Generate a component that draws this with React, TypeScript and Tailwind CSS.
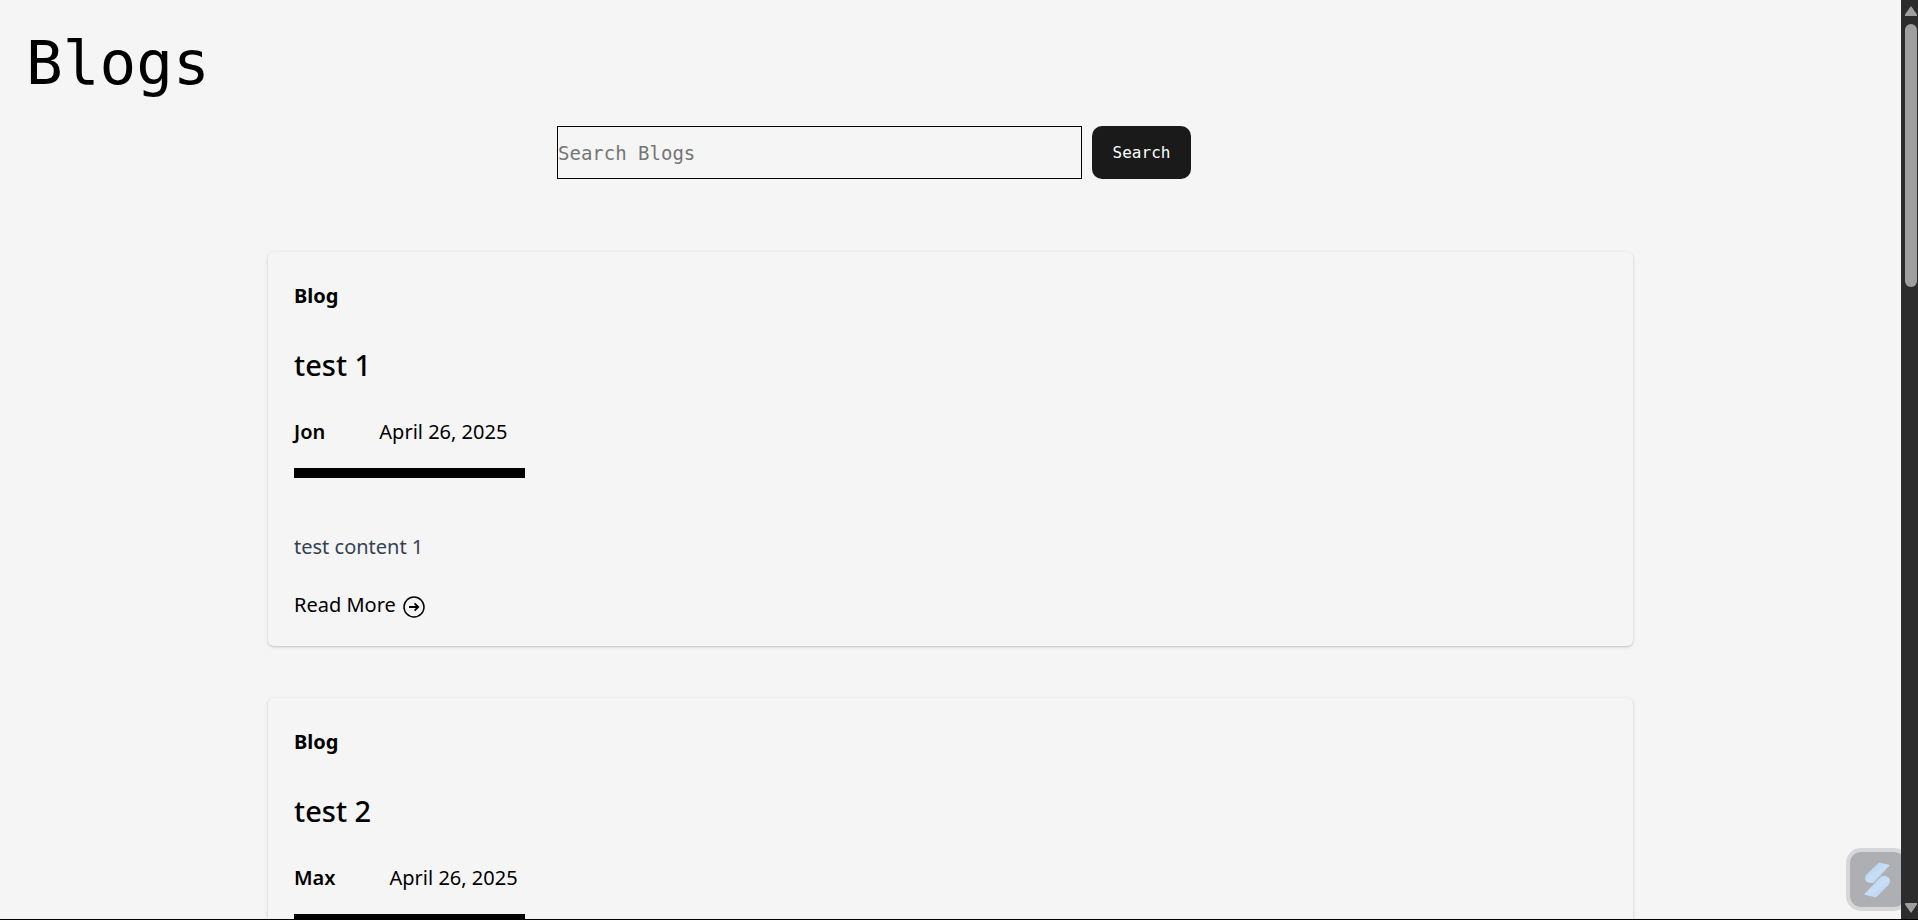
const posts = [
  { title: "test 1", author: "Jon", date: "April 26, 2025", content: "test content 1" },
  { title: "test 2", author: "Max", date: "April 26, 2025", content: "test content 2" },
];

type Post = (typeof posts)[number];

function ArrowCircle() {
  return (
    <svg className="mt-1 size-[22px]" viewBox="0 0 22 22" fill="none" stroke="currentColor" strokeWidth="1.5" aria-hidden="true">
      <circle cx="11" cy="11" r="10" />
      <path strokeWidth="1.8" d="M6 11h9M11.600 7.400 15.200 11l-3.600 3.600" />
    </svg>
  );
}

function BlogCard({ post }: { post: Post }) {
  return (
    <article className="rounded-md px-[26px] pt-[26px] pb-[25px] shadow-[0_1px_4px_rgba(0,0,0,0.1),0_1px_2px_rgba(0,0,0,0.12)]">
      <p className="text-[20px] leading-9 font-bold">Blog</p>
      <h2 className="mt-7 text-[29px] leading-[46px] font-medium">{post.title}</h2>
      <div className="mt-[26px] flex gap-[54px] text-[20px] leading-9">
        <span className="font-semibold">{post.author}</span>
        <time>{post.date}</time>
      </div>
      <div className="mt-[18px] h-[10px] w-[231px] bg-black" />
      <p className="mt-[53px] text-[20px] leading-8 text-[#364153]">{post.content}</p>
      <a href="#" className="mt-[26px] inline-flex items-center gap-[7px] text-[20px] leading-8">
        Read More
        <ArrowCircle />
      </a>
    </article>
  );
}

function ScrollRail() {
  return (
    <div className="flex w-[17px] shrink-0 flex-col items-end bg-[#2c2c2c] py-[6px] pr-px" aria-hidden="true">
      <svg className="h-[10px] w-3 shrink-0" viewBox="0 0 12 10" fill="#9f9f9f">
        <path d="M6 0 12 8.6V10H0V8.6Z" />
      </svg>
      <div className="mt-2 h-[263px] w-3 rounded-full bg-[#9f9f9f]" />
      <svg className="mt-auto h-[10px] w-3 shrink-0" viewBox="0 0 12 10" fill="#9f9f9f">
        <path d="M6 10 12 1.4V0H0V1.4Z" />
      </svg>
    </div>
  );
}

function FloatingBadge() {
  return (
    <button
      type="button"
      aria-label="Open assistant"
      className="absolute right-[9px] bottom-2 flex size-[63px] items-center justify-center rounded-[15px] border-4 border-[#2c2f3a]/15 bg-[#2c2f3a]/35 bg-clip-padding"
    >
      <svg className="h-[36px] w-[27px]" viewBox="0 0 27 36">
        <defs>
          <linearGradient id="badge-fill" x1="0" y1="0" x2="1" y2="1">
            <stop offset="0" stopColor="#a9cbee" />
            <stop offset="0.5" stopColor="#c9def5" />
            <stop offset="1" stopColor="#a9cdf3" />
          </linearGradient>
        </defs>
        <path d="M15 .5 26 3 10 20.5C6 22 1 20 1 16.500Q1 14 3 12Z" fill="url(#badge-fill)" />
        <path d="M12 35.500 0 32.500 17 14.500C21 13 26 15 26 19Q26 21.500 24 23.500Z" fill="url(#badge-fill)" />
      </svg>
    </button>
  );
}

export default function App() {
  return (
    <div className="relative flex h-screen overflow-hidden border-b border-black bg-[#f5f5f5] font-['Noto_Sans',sans-serif] text-black">
      <main className="min-w-0 flex-1 overflow-y-auto [scrollbar-width:none]">
        <h1 className="px-[26px] pt-[26px] font-['DejaVu_Sans_Mono',monospace] text-[61px] leading-[74px]">Blogs</h1>
        <form className="mt-[26px] flex justify-center gap-[10px] pr-[153px] font-['DejaVu_Sans_Mono',monospace]" onSubmit={(e) => e.preventDefault()}>
          <input
            type="search"
            aria-label="Search Blogs"
            placeholder="Search Blogs"
            className="h-[53px] w-[525px] border border-black bg-transparent text-[19px] placeholder:text-[#757575]"
          />
          <button type="submit" className="h-[53px] w-[99px] rounded-[10px] bg-[#1a1a1a] text-[16px] text-white">
            Search
          </button>
        </form>
        <section className="mt-[73px] flex flex-col gap-[52px] px-[14.1%] pb-[52px]">
          {posts.map((post) => (
            <BlogCard key={post.title} post={post} />
          ))}
        </section>
      </main>
      <ScrollRail />
      <FloatingBadge />
    </div>
  );
}
